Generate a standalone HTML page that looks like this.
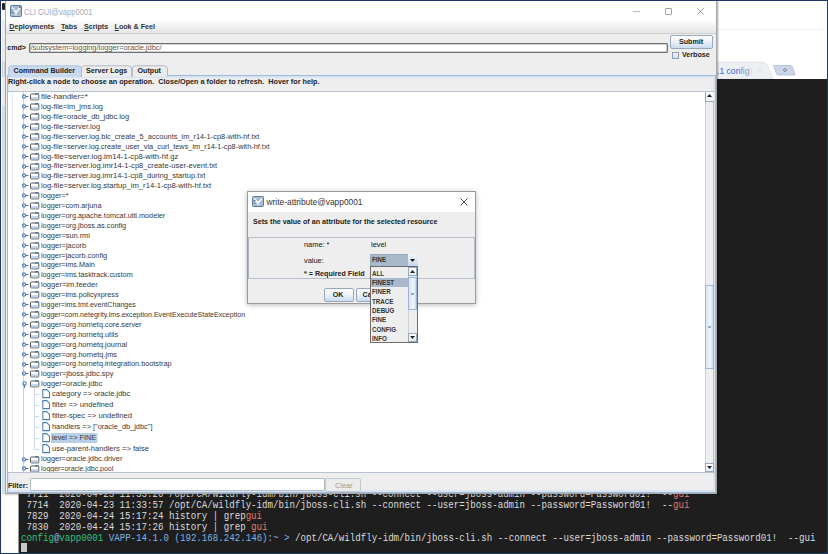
<!DOCTYPE html>
<html><head><meta charset="utf-8">
<style>
*{margin:0;padding:0;box-sizing:border-box}
html,body{width:828px;height:554px;overflow:hidden;background:#1f3a6a}
body{position:relative;font-family:"Liberation Sans",sans-serif}
.a{position:absolute}
#desk{left:1px;top:1px;width:826px;height:552px;background:#fff}
#term{left:19px;top:79px;width:808px;height:474px;background:#1e1e1e;font-family:"Liberation Mono",monospace;font-size:10px;color:#dcdcdc;white-space:pre;overflow:hidden}
.tl{position:absolute;left:2px;line-height:11px;transform:scaleX(0.913);transform-origin:0 0}
.g{color:#e47a70}
#win{left:5px;top:1px;width:712px;height:493px;background:#eeeeee;border:1px solid #a8a8a8;border-top:none;overflow:hidden}
.bt{font-size:7.15px;font-weight:bold;color:#222;white-space:nowrap;position:absolute;line-height:9px}
.tr{position:absolute;font-size:7.35px;color:#383838;white-space:nowrap;line-height:10px;transform-origin:0 50%}
.sel{background:#b8cfe5;padding:0 1px;margin-left:-1px}
.btn{position:absolute;border:1px solid #98a8bc;border-radius:2px;background:linear-gradient(#fdfdfd,#eef3f9 45%,#c9dcf0)}
</style></head><body>
<div id="desk" class="a"></div>
<!-- behind browser tabs -->
<div class="a" style="left:717px;top:29px;width:109px;height:1px;background:#f2f2f2"></div>
<svg class="a" style="left:700px;top:60px" width="110" height="20" viewBox="0 0 110 20">
<path d="M0 19 L0 4 Q0 2 4 2 L62 2 Q66 2 68 6 L73 19 Z" fill="#eceff3" stroke="#dfe3e8" stroke-width="0.8"/>
<path d="M73.5 5.5 L90.5 5.5 Q91.5 5.5 92 6.5 L95.2 14 Q95.4 15 94.2 15 L78 15 Q77 15 76.6 14 Z" fill="#c9d6e7" stroke="#aebcd0" stroke-width="0.8"/>
<path d="M85 8.3 L86.7 10 L85 11.7 L83.3 10 Z" fill="none" stroke="#555" stroke-width="0.7"/>
</svg>
<div class="a" style="left:717px;top:66px;font-size:8.6px;color:#4a5ee0;white-space:nowrap;line-height:10px">.1 con<span style="color:#8e96a6">fig</span><span style="color:#d8dce2">)</span></div>
<div class="a" style="left:757px;top:65px;font-size:9px;color:#e4e4e4">×</div>
<div class="a" style="left:2px;top:3px;width:3px;height:7px;background:#222;border-radius:1px"></div>
<div class="a" style="left:2px;top:20px;width:3px;height:86px;background:#ececec"></div>
<div class="a" style="left:2px;top:106px;width:3px;height:388px;background:#d3deeb"></div>
<div class="a" style="left:2px;top:61px;width:3px;height:16px;border:1px solid #ccc;border-radius:2px"></div>
<div class="a" style="left:18px;top:494px;width:1px;height:59px;background:#999"></div>
<div id="term" class="a">
<div class="tl" style="top:410px"> 7711  2020-04-23 11:33:20 /opt/CA/wildfly-idm/bin/jboss-cli.sh --connect --user=jboss-admin --password=Password01!  --<span class="g">gui</span></div>
<div class="tl" style="top:421px"> 7714  2020-04-23 11:33:57 /opt/CA/wildfly-idm/bin/jboss-cli.sh --connect --user=jboss-admin --password=Password01!  --<span class="g">gui</span></div>
<div class="tl" style="top:431.8px"> 7829  2020-04-24 15:17:24 history | grep<span class="g">gui</span></div>
<div class="tl" style="top:443px"> 7830  2020-04-24 15:17:26 history | grep <span class="g">gui</span></div>
<div class="tl" style="top:454px"><span style="color:#2ec27e">config</span><span style="color:#8fb0d8">@</span><span style="color:#2ec27e">vapp0001</span> <span style="color:#7db3e6">VAPP-14.1.0 (192.168.242.146):~ &gt;</span> /opt/CA/wildfly-idm/bin/jboss-cli.sh --connect --user=jboss-admin --password=Password01!  --gui</div>
<div class="a" style="left:2px;top:464px;width:6px;height:9px;background:#c8c8c8"></div>
</div>

<div class="a" style="left:717px;top:1px;width:2px;height:494px;background:linear-gradient(90deg,rgba(0,0,0,0.3),rgba(0,0,0,0.05))"></div>
<div class="a" style="left:720px;top:79px;width:1px;height:415px;background:repeating-linear-gradient(#141414 0 1px,transparent 1px 4px)"></div>
<div class="a" style="left:5px;top:494px;width:713px;height:1.5px;background:linear-gradient(rgba(0,0,0,0.2),rgba(0,0,0,0))"></div>
<div id="win" class="a">
  <!-- title bar: window-local coords = page - (6,1) -->
  <div class="a" style="left:0;top:0;width:710px;height:19px;background:#fff"></div>
  <svg class="a" style="left:4.2px;top:4.2px" width="12" height="12" viewBox="0 0 12 12">
    <rect x="0.5" y="0.5" width="11" height="11" rx="1" fill="#a8bbcf" stroke="#5a7ba2" stroke-width="1"/>
    <path d="M2 2.5 L6 7.5 L10 2.5" stroke="#f7f9fb" stroke-width="1.6" fill="none"/>
    <path d="M6 7.5 V10.5" stroke="#f2f5f8" stroke-width="1.3"/>
    <path d="M1.5 5 H3.5 M1.5 7.5 H3.5" stroke="#5b708a" stroke-width="0.9"/>
    <circle cx="10" cy="2.2" r="1.1" fill="#8f8272"/>
  </svg>
  <div class="a" style="left:18.3px;top:5.8px;font-size:9.3px;line-height:10px;color:#a3acb5;white-space:nowrap;transform:scaleX(0.815);transform-origin:0 0">CLI GUI@vapp0001</div>
  <div class="a" style="left:627.3px;top:10px;width:6.7px;height:1px;background:#b8b8b8"></div>
  <div class="a" style="left:659px;top:6.8px;width:7px;height:6.8px;border:1px solid #a4a4a4;border-radius:1px"></div>
  <svg class="a" style="left:691.3px;top:6.5px" width="7" height="7" viewBox="0 0 7 7"><path d="M0.4 0.4 L6.6 6.6 M6.6 0.4 L0.4 6.6" stroke="#8a8a8a" stroke-width="0.9"/></svg>
  <!-- menubar -->
  <div class="a" style="left:0;top:19px;width:710px;height:14px;background:linear-gradient(#fdfdfd,#e6e6e6);border-bottom:1px solid #cdcdcd"></div>
  <div class="bt" style="left:3.3px;top:22px;color:#333"><u>D</u>eployments</div>
  <div class="bt" style="left:55px;top:22px;color:#333"><u>T</u>abs</div>
  <div class="bt" style="left:78px;top:22px;color:#333"><u>S</u>cripts</div>
  <div class="bt" style="left:108.5px;top:22px;color:#333"><u>L</u>ook &amp; Feel</div>
  <!-- cmd row -->
  <div class="bt" style="left:1.2px;top:42.8px">cmd&gt;</div>
  <div class="a" style="left:23px;top:42px;width:639px;height:10px;background:#fff;border:1px solid #6f6f6f;border-radius:1px;box-shadow:inset 0 0 0 0.5px #aaa"></div>
  <div class="a" style="left:24.5px;top:42px;font-size:7.45px;color:#555;white-space:nowrap;line-height:10px">/subsystem=logging/logger=oracle.jdbc/</div>
  <div class="btn" style="left:664px;top:33.5px;width:43px;height:14px"></div>
  <div class="bt" style="left:673px;top:36.5px">Submit</div>
  <div class="a" style="left:666px;top:50.5px;width:7px;height:7px;border:1px solid #8aa0b8;background:linear-gradient(#f4f8fc,#d0dff0)"></div>
  <div class="bt" style="left:676px;top:50px">Verbose</div>
  <!-- tabs -->
  <div class="a" style="left:1px;top:74px;width:709px;height:418px;border:1px solid #9fb7da;border-right-width:1.5px;box-shadow:inset 0 0 0 2px #dae5f2"></div>
  <svg class="a" style="left:2px;top:64px" width="170" height="13" viewBox="0 0 170 13">
    <path d="M0.7 12 V2.5 L2.5 0.8 L70 0.8 Q73.5 0.8 73.5 4 L73.5 12" fill="#c8daef" stroke="#a9c0dc" stroke-width="0.9"/>
    <path d="M73.5 12 V2.5 L75.3 0.8 L120 0.8 Q123.7 0.8 123.7 4 L123.7 11.5" fill="#ececec" stroke="#a8b4c2" stroke-width="0.9"/>
    <path d="M124.5 12 V2.5 L126.3 0.8 L156 0.8 Q159.5 0.8 159.5 4 L159.5 11.5" fill="#ececec" stroke="#a8b4c2" stroke-width="0.9"/>
  </svg>
  <div class="bt" style="left:7.5px;top:66px">Command Builder</div>
  <div class="bt" style="left:80px;top:66px">Server Logs</div>
  <div class="bt" style="left:131.5px;top:66px">Output</div>
  <div class="bt" style="left:2px;top:76.4px;font-size:7.25px">Right-click a node to choose an operation.&nbsp; Close/Open a folder to refresh.&nbsp; Hover for help.</div>
  <!-- tree -->
  <div class="a" style="left:2px;top:90px;width:708px;height:1px;background:#b9c3cf"></div>
  <div class="a" style="left:2px;top:91px;width:697px;height:380px;background:#fff;overflow:hidden">
<div class="a" style="left:4px;top:0px;width:1px;height:380px;background:#dfe8f3"></div>
<div class="a" style="left:26px;top:296px;width:1px;height:61px;background:#c9d8ea"></div>
<div class="a" style="left:15px;top:0px;width:1px;height:380px;background:#c4d5ea"></div>
<svg class="a" style="left:13.5px;top:2.200000000000003px" width="7" height="5" viewBox="0 0 7 5"><circle cx="2" cy="2.5" r="1.6" fill="none" stroke="#4a78b8" stroke-width="1.1"/><line x1="3.6" y1="2.5" x2="6.5" y2="2.5" stroke="#4a78b8" stroke-width="1.1"/></svg>
<svg class="a" style="left:22px;top:1.2000000000000028px" width="10" height="8" viewBox="0 0 10 8"><rect x="0.5" y="1.0" width="8.3" height="5.9" rx="0.8" fill="#fff" stroke="#5a5a5a" stroke-width="1"/><rect x="1.0" y="4.2" width="7.3" height="2.2" fill="#bcd2ea"/><rect x="5.0" y="0.1" width="3.8" height="1.3" fill="#4373b3"/></svg>
<div class="tr" style="left:33px;top:0.10000000000000853px;transform:scaleX(1.075)">file-handler=*</div>
<svg class="a" style="left:13.5px;top:12.100000000000009px" width="7" height="5" viewBox="0 0 7 5"><circle cx="2" cy="2.5" r="1.6" fill="none" stroke="#4a78b8" stroke-width="1.1"/><line x1="3.6" y1="2.5" x2="6.5" y2="2.5" stroke="#4a78b8" stroke-width="1.1"/></svg>
<svg class="a" style="left:22px;top:11.100000000000009px" width="10" height="8" viewBox="0 0 10 8"><rect x="0.5" y="1.0" width="8.3" height="5.9" rx="0.8" fill="#fff" stroke="#5a5a5a" stroke-width="1"/><rect x="1.0" y="4.2" width="7.3" height="2.2" fill="#bcd2ea"/><rect x="5.0" y="0.1" width="3.8" height="1.3" fill="#4373b3"/></svg>
<div class="tr" style="left:33px;top:10.000000000000014px;transform:scaleX(1.015)">log-file=im_jms.log</div>
<svg class="a" style="left:13.5px;top:22.0px" width="7" height="5" viewBox="0 0 7 5"><circle cx="2" cy="2.5" r="1.6" fill="none" stroke="#4a78b8" stroke-width="1.1"/><line x1="3.6" y1="2.5" x2="6.5" y2="2.5" stroke="#4a78b8" stroke-width="1.1"/></svg>
<svg class="a" style="left:22px;top:21.0px" width="10" height="8" viewBox="0 0 10 8"><rect x="0.5" y="1.0" width="8.3" height="5.9" rx="0.8" fill="#fff" stroke="#5a5a5a" stroke-width="1"/><rect x="1.0" y="4.2" width="7.3" height="2.2" fill="#bcd2ea"/><rect x="5.0" y="0.1" width="3.8" height="1.3" fill="#4373b3"/></svg>
<div class="tr" style="left:33px;top:19.900000000000006px;transform:scaleX(1.005)">log-file=oracle_db_jdbc.log</div>
<svg class="a" style="left:13.5px;top:31.900000000000006px" width="7" height="5" viewBox="0 0 7 5"><circle cx="2" cy="2.5" r="1.6" fill="none" stroke="#4a78b8" stroke-width="1.1"/><line x1="3.6" y1="2.5" x2="6.5" y2="2.5" stroke="#4a78b8" stroke-width="1.1"/></svg>
<svg class="a" style="left:22px;top:30.900000000000006px" width="10" height="8" viewBox="0 0 10 8"><rect x="0.5" y="1.0" width="8.3" height="5.9" rx="0.8" fill="#fff" stroke="#5a5a5a" stroke-width="1"/><rect x="1.0" y="4.2" width="7.3" height="2.2" fill="#bcd2ea"/><rect x="5.0" y="0.1" width="3.8" height="1.3" fill="#4373b3"/></svg>
<div class="tr" style="left:33px;top:29.80000000000001px;transform:scaleX(1.024)">log-file=server.log</div>
<svg class="a" style="left:13.5px;top:41.80000000000001px" width="7" height="5" viewBox="0 0 7 5"><circle cx="2" cy="2.5" r="1.6" fill="none" stroke="#4a78b8" stroke-width="1.1"/><line x1="3.6" y1="2.5" x2="6.5" y2="2.5" stroke="#4a78b8" stroke-width="1.1"/></svg>
<svg class="a" style="left:22px;top:40.80000000000001px" width="10" height="8" viewBox="0 0 10 8"><rect x="0.5" y="1.0" width="8.3" height="5.9" rx="0.8" fill="#fff" stroke="#5a5a5a" stroke-width="1"/><rect x="1.0" y="4.2" width="7.3" height="2.2" fill="#bcd2ea"/><rect x="5.0" y="0.1" width="3.8" height="1.3" fill="#4373b3"/></svg>
<div class="tr" style="left:33px;top:39.70000000000002px;transform:scaleX(1.008)">log-file=server.log.blc_create_5_accounts_im_r14-1-cp8-with-hf.txt</div>
<svg class="a" style="left:13.5px;top:51.69999999999999px" width="7" height="5" viewBox="0 0 7 5"><circle cx="2" cy="2.5" r="1.6" fill="none" stroke="#4a78b8" stroke-width="1.1"/><line x1="3.6" y1="2.5" x2="6.5" y2="2.5" stroke="#4a78b8" stroke-width="1.1"/></svg>
<svg class="a" style="left:22px;top:50.69999999999999px" width="10" height="8" viewBox="0 0 10 8"><rect x="0.5" y="1.0" width="8.3" height="5.9" rx="0.8" fill="#fff" stroke="#5a5a5a" stroke-width="1"/><rect x="1.0" y="4.2" width="7.3" height="2.2" fill="#bcd2ea"/><rect x="5.0" y="0.1" width="3.8" height="1.3" fill="#4373b3"/></svg>
<div class="tr" style="left:33px;top:49.599999999999994px;transform:scaleX(1.001)">log-file=server.log.create_user_via_curl_tews_im_r14-1-cp8-with-hf.txt</div>
<svg class="a" style="left:13.5px;top:61.60000000000002px" width="7" height="5" viewBox="0 0 7 5"><circle cx="2" cy="2.5" r="1.6" fill="none" stroke="#4a78b8" stroke-width="1.1"/><line x1="3.6" y1="2.5" x2="6.5" y2="2.5" stroke="#4a78b8" stroke-width="1.1"/></svg>
<svg class="a" style="left:22px;top:60.60000000000002px" width="10" height="8" viewBox="0 0 10 8"><rect x="0.5" y="1.0" width="8.3" height="5.9" rx="0.8" fill="#fff" stroke="#5a5a5a" stroke-width="1"/><rect x="1.0" y="4.2" width="7.3" height="2.2" fill="#bcd2ea"/><rect x="5.0" y="0.1" width="3.8" height="1.3" fill="#4373b3"/></svg>
<div class="tr" style="left:33px;top:59.50000000000003px;transform:scaleX(1.054)">log-file=server.log.im14-1-cp8-with-hf.gz</div>
<svg class="a" style="left:13.5px;top:71.5px" width="7" height="5" viewBox="0 0 7 5"><circle cx="2" cy="2.5" r="1.6" fill="none" stroke="#4a78b8" stroke-width="1.1"/><line x1="3.6" y1="2.5" x2="6.5" y2="2.5" stroke="#4a78b8" stroke-width="1.1"/></svg>
<svg class="a" style="left:22px;top:70.5px" width="10" height="8" viewBox="0 0 10 8"><rect x="0.5" y="1.0" width="8.3" height="5.9" rx="0.8" fill="#fff" stroke="#5a5a5a" stroke-width="1"/><rect x="1.0" y="4.2" width="7.3" height="2.2" fill="#bcd2ea"/><rect x="5.0" y="0.1" width="3.8" height="1.3" fill="#4373b3"/></svg>
<div class="tr" style="left:33px;top:69.4px;transform:scaleX(1.034)">log-file=server.log.imr14-1-cp8_create-user-event.txt</div>
<svg class="a" style="left:13.5px;top:81.4px" width="7" height="5" viewBox="0 0 7 5"><circle cx="2" cy="2.5" r="1.6" fill="none" stroke="#4a78b8" stroke-width="1.1"/><line x1="3.6" y1="2.5" x2="6.5" y2="2.5" stroke="#4a78b8" stroke-width="1.1"/></svg>
<svg class="a" style="left:22px;top:80.4px" width="10" height="8" viewBox="0 0 10 8"><rect x="0.5" y="1.0" width="8.3" height="5.9" rx="0.8" fill="#fff" stroke="#5a5a5a" stroke-width="1"/><rect x="1.0" y="4.2" width="7.3" height="2.2" fill="#bcd2ea"/><rect x="5.0" y="0.1" width="3.8" height="1.3" fill="#4373b3"/></svg>
<div class="tr" style="left:33px;top:79.30000000000001px;transform:scaleX(1.028)">log-file=server.log.imr14-1-cp8_during_startup.txt</div>
<svg class="a" style="left:13.5px;top:91.30000000000001px" width="7" height="5" viewBox="0 0 7 5"><circle cx="2" cy="2.5" r="1.6" fill="none" stroke="#4a78b8" stroke-width="1.1"/><line x1="3.6" y1="2.5" x2="6.5" y2="2.5" stroke="#4a78b8" stroke-width="1.1"/></svg>
<svg class="a" style="left:22px;top:90.30000000000001px" width="10" height="8" viewBox="0 0 10 8"><rect x="0.5" y="1.0" width="8.3" height="5.9" rx="0.8" fill="#fff" stroke="#5a5a5a" stroke-width="1"/><rect x="1.0" y="4.2" width="7.3" height="2.2" fill="#bcd2ea"/><rect x="5.0" y="0.1" width="3.8" height="1.3" fill="#4373b3"/></svg>
<div class="tr" style="left:33px;top:89.20000000000002px;transform:scaleX(1.040)">log-file=server.log.startup_im_r14-1-cp8-with-hf.txt</div>
<svg class="a" style="left:13.5px;top:101.19999999999999px" width="7" height="5" viewBox="0 0 7 5"><circle cx="2" cy="2.5" r="1.6" fill="none" stroke="#4a78b8" stroke-width="1.1"/><line x1="3.6" y1="2.5" x2="6.5" y2="2.5" stroke="#4a78b8" stroke-width="1.1"/></svg>
<svg class="a" style="left:22px;top:100.19999999999999px" width="10" height="8" viewBox="0 0 10 8"><rect x="0.5" y="1.0" width="8.3" height="5.9" rx="0.8" fill="#fff" stroke="#5a5a5a" stroke-width="1"/><rect x="1.0" y="4.2" width="7.3" height="2.2" fill="#bcd2ea"/><rect x="5.0" y="0.1" width="3.8" height="1.3" fill="#4373b3"/></svg>
<div class="tr" style="left:33px;top:99.1px;transform:scaleX(1.000)">logger=*</div>
<svg class="a" style="left:13.5px;top:111.10000000000002px" width="7" height="5" viewBox="0 0 7 5"><circle cx="2" cy="2.5" r="1.6" fill="none" stroke="#4a78b8" stroke-width="1.1"/><line x1="3.6" y1="2.5" x2="6.5" y2="2.5" stroke="#4a78b8" stroke-width="1.1"/></svg>
<svg class="a" style="left:22px;top:110.10000000000002px" width="10" height="8" viewBox="0 0 10 8"><rect x="0.5" y="1.0" width="8.3" height="5.9" rx="0.8" fill="#fff" stroke="#5a5a5a" stroke-width="1"/><rect x="1.0" y="4.2" width="7.3" height="2.2" fill="#bcd2ea"/><rect x="5.0" y="0.1" width="3.8" height="1.3" fill="#4373b3"/></svg>
<div class="tr" style="left:33px;top:109.00000000000003px;transform:scaleX(0.990)">logger=com.arjuna</div>
<svg class="a" style="left:13.5px;top:121.0px" width="7" height="5" viewBox="0 0 7 5"><circle cx="2" cy="2.5" r="1.6" fill="none" stroke="#4a78b8" stroke-width="1.1"/><line x1="3.6" y1="2.5" x2="6.5" y2="2.5" stroke="#4a78b8" stroke-width="1.1"/></svg>
<svg class="a" style="left:22px;top:120.0px" width="10" height="8" viewBox="0 0 10 8"><rect x="0.5" y="1.0" width="8.3" height="5.9" rx="0.8" fill="#fff" stroke="#5a5a5a" stroke-width="1"/><rect x="1.0" y="4.2" width="7.3" height="2.2" fill="#bcd2ea"/><rect x="5.0" y="0.1" width="3.8" height="1.3" fill="#4373b3"/></svg>
<div class="tr" style="left:33px;top:118.9px;transform:scaleX(0.990)">logger=org.apache.tomcat.util.modeler</div>
<svg class="a" style="left:13.5px;top:130.90000000000003px" width="7" height="5" viewBox="0 0 7 5"><circle cx="2" cy="2.5" r="1.6" fill="none" stroke="#4a78b8" stroke-width="1.1"/><line x1="3.6" y1="2.5" x2="6.5" y2="2.5" stroke="#4a78b8" stroke-width="1.1"/></svg>
<svg class="a" style="left:22px;top:129.90000000000003px" width="10" height="8" viewBox="0 0 10 8"><rect x="0.5" y="1.0" width="8.3" height="5.9" rx="0.8" fill="#fff" stroke="#5a5a5a" stroke-width="1"/><rect x="1.0" y="4.2" width="7.3" height="2.2" fill="#bcd2ea"/><rect x="5.0" y="0.1" width="3.8" height="1.3" fill="#4373b3"/></svg>
<div class="tr" style="left:33px;top:128.80000000000004px;transform:scaleX(0.991)">logger=org.jboss.as.config</div>
<svg class="a" style="left:13.5px;top:140.8px" width="7" height="5" viewBox="0 0 7 5"><circle cx="2" cy="2.5" r="1.6" fill="none" stroke="#4a78b8" stroke-width="1.1"/><line x1="3.6" y1="2.5" x2="6.5" y2="2.5" stroke="#4a78b8" stroke-width="1.1"/></svg>
<svg class="a" style="left:22px;top:139.8px" width="10" height="8" viewBox="0 0 10 8"><rect x="0.5" y="1.0" width="8.3" height="5.9" rx="0.8" fill="#fff" stroke="#5a5a5a" stroke-width="1"/><rect x="1.0" y="4.2" width="7.3" height="2.2" fill="#bcd2ea"/><rect x="5.0" y="0.1" width="3.8" height="1.3" fill="#4373b3"/></svg>
<div class="tr" style="left:33px;top:138.70000000000002px;transform:scaleX(1.002)">logger=sun.rmi</div>
<svg class="a" style="left:13.5px;top:150.7px" width="7" height="5" viewBox="0 0 7 5"><circle cx="2" cy="2.5" r="1.6" fill="none" stroke="#4a78b8" stroke-width="1.1"/><line x1="3.6" y1="2.5" x2="6.5" y2="2.5" stroke="#4a78b8" stroke-width="1.1"/></svg>
<svg class="a" style="left:22px;top:149.7px" width="10" height="8" viewBox="0 0 10 8"><rect x="0.5" y="1.0" width="8.3" height="5.9" rx="0.8" fill="#fff" stroke="#5a5a5a" stroke-width="1"/><rect x="1.0" y="4.2" width="7.3" height="2.2" fill="#bcd2ea"/><rect x="5.0" y="0.1" width="3.8" height="1.3" fill="#4373b3"/></svg>
<div class="tr" style="left:33px;top:148.6px;transform:scaleX(1.009)">logger=jacorb</div>
<svg class="a" style="left:13.5px;top:160.60000000000002px" width="7" height="5" viewBox="0 0 7 5"><circle cx="2" cy="2.5" r="1.6" fill="none" stroke="#4a78b8" stroke-width="1.1"/><line x1="3.6" y1="2.5" x2="6.5" y2="2.5" stroke="#4a78b8" stroke-width="1.1"/></svg>
<svg class="a" style="left:22px;top:159.60000000000002px" width="10" height="8" viewBox="0 0 10 8"><rect x="0.5" y="1.0" width="8.3" height="5.9" rx="0.8" fill="#fff" stroke="#5a5a5a" stroke-width="1"/><rect x="1.0" y="4.2" width="7.3" height="2.2" fill="#bcd2ea"/><rect x="5.0" y="0.1" width="3.8" height="1.3" fill="#4373b3"/></svg>
<div class="tr" style="left:33px;top:158.50000000000003px;transform:scaleX(0.997)">logger=jacorb.config</div>
<svg class="a" style="left:13.5px;top:170.5px" width="7" height="5" viewBox="0 0 7 5"><circle cx="2" cy="2.5" r="1.6" fill="none" stroke="#4a78b8" stroke-width="1.1"/><line x1="3.6" y1="2.5" x2="6.5" y2="2.5" stroke="#4a78b8" stroke-width="1.1"/></svg>
<svg class="a" style="left:22px;top:169.5px" width="10" height="8" viewBox="0 0 10 8"><rect x="0.5" y="1.0" width="8.3" height="5.9" rx="0.8" fill="#fff" stroke="#5a5a5a" stroke-width="1"/><rect x="1.0" y="4.2" width="7.3" height="2.2" fill="#bcd2ea"/><rect x="5.0" y="0.1" width="3.8" height="1.3" fill="#4373b3"/></svg>
<div class="tr" style="left:33px;top:168.39999999999998px;transform:scaleX(0.996)">logger=ims.Main</div>
<svg class="a" style="left:13.5px;top:180.40000000000003px" width="7" height="5" viewBox="0 0 7 5"><circle cx="2" cy="2.5" r="1.6" fill="none" stroke="#4a78b8" stroke-width="1.1"/><line x1="3.6" y1="2.5" x2="6.5" y2="2.5" stroke="#4a78b8" stroke-width="1.1"/></svg>
<svg class="a" style="left:22px;top:179.40000000000003px" width="10" height="8" viewBox="0 0 10 8"><rect x="0.5" y="1.0" width="8.3" height="5.9" rx="0.8" fill="#fff" stroke="#5a5a5a" stroke-width="1"/><rect x="1.0" y="4.2" width="7.3" height="2.2" fill="#bcd2ea"/><rect x="5.0" y="0.1" width="3.8" height="1.3" fill="#4373b3"/></svg>
<div class="tr" style="left:33px;top:178.3px;transform:scaleX(0.984)">logger=ims.tasktrack.custom</div>
<svg class="a" style="left:13.5px;top:190.3px" width="7" height="5" viewBox="0 0 7 5"><circle cx="2" cy="2.5" r="1.6" fill="none" stroke="#4a78b8" stroke-width="1.1"/><line x1="3.6" y1="2.5" x2="6.5" y2="2.5" stroke="#4a78b8" stroke-width="1.1"/></svg>
<svg class="a" style="left:22px;top:189.3px" width="10" height="8" viewBox="0 0 10 8"><rect x="0.5" y="1.0" width="8.3" height="5.9" rx="0.8" fill="#fff" stroke="#5a5a5a" stroke-width="1"/><rect x="1.0" y="4.2" width="7.3" height="2.2" fill="#bcd2ea"/><rect x="5.0" y="0.1" width="3.8" height="1.3" fill="#4373b3"/></svg>
<div class="tr" style="left:33px;top:188.2px;transform:scaleX(1.024)">logger=im.feeder</div>
<svg class="a" style="left:13.5px;top:200.2px" width="7" height="5" viewBox="0 0 7 5"><circle cx="2" cy="2.5" r="1.6" fill="none" stroke="#4a78b8" stroke-width="1.1"/><line x1="3.6" y1="2.5" x2="6.5" y2="2.5" stroke="#4a78b8" stroke-width="1.1"/></svg>
<svg class="a" style="left:22px;top:199.2px" width="10" height="8" viewBox="0 0 10 8"><rect x="0.5" y="1.0" width="8.3" height="5.9" rx="0.8" fill="#fff" stroke="#5a5a5a" stroke-width="1"/><rect x="1.0" y="4.2" width="7.3" height="2.2" fill="#bcd2ea"/><rect x="5.0" y="0.1" width="3.8" height="1.3" fill="#4373b3"/></svg>
<div class="tr" style="left:33px;top:198.09999999999997px;transform:scaleX(0.987)">logger=ims.policyxpress</div>
<svg class="a" style="left:13.5px;top:210.10000000000002px" width="7" height="5" viewBox="0 0 7 5"><circle cx="2" cy="2.5" r="1.6" fill="none" stroke="#4a78b8" stroke-width="1.1"/><line x1="3.6" y1="2.5" x2="6.5" y2="2.5" stroke="#4a78b8" stroke-width="1.1"/></svg>
<svg class="a" style="left:22px;top:209.10000000000002px" width="10" height="8" viewBox="0 0 10 8"><rect x="0.5" y="1.0" width="8.3" height="5.9" rx="0.8" fill="#fff" stroke="#5a5a5a" stroke-width="1"/><rect x="1.0" y="4.2" width="7.3" height="2.2" fill="#bcd2ea"/><rect x="5.0" y="0.1" width="3.8" height="1.3" fill="#4373b3"/></svg>
<div class="tr" style="left:33px;top:208.0px;transform:scaleX(0.970)">logger=ims.tmt.eventChanges</div>
<svg class="a" style="left:13.5px;top:220.0px" width="7" height="5" viewBox="0 0 7 5"><circle cx="2" cy="2.5" r="1.6" fill="none" stroke="#4a78b8" stroke-width="1.1"/><line x1="3.6" y1="2.5" x2="6.5" y2="2.5" stroke="#4a78b8" stroke-width="1.1"/></svg>
<svg class="a" style="left:22px;top:219.0px" width="10" height="8" viewBox="0 0 10 8"><rect x="0.5" y="1.0" width="8.3" height="5.9" rx="0.8" fill="#fff" stroke="#5a5a5a" stroke-width="1"/><rect x="1.0" y="4.2" width="7.3" height="2.2" fill="#bcd2ea"/><rect x="5.0" y="0.1" width="3.8" height="1.3" fill="#4373b3"/></svg>
<div class="tr" style="left:33px;top:217.89999999999998px;transform:scaleX(0.963)">logger=com.netegrity.ims.exception.EventExecuteStateException</div>
<svg class="a" style="left:13.5px;top:229.90000000000003px" width="7" height="5" viewBox="0 0 7 5"><circle cx="2" cy="2.5" r="1.6" fill="none" stroke="#4a78b8" stroke-width="1.1"/><line x1="3.6" y1="2.5" x2="6.5" y2="2.5" stroke="#4a78b8" stroke-width="1.1"/></svg>
<svg class="a" style="left:22px;top:228.90000000000003px" width="10" height="8" viewBox="0 0 10 8"><rect x="0.5" y="1.0" width="8.3" height="5.9" rx="0.8" fill="#fff" stroke="#5a5a5a" stroke-width="1"/><rect x="1.0" y="4.2" width="7.3" height="2.2" fill="#bcd2ea"/><rect x="5.0" y="0.1" width="3.8" height="1.3" fill="#4373b3"/></svg>
<div class="tr" style="left:33px;top:227.8px;transform:scaleX(0.995)">logger=org.hornetq.core.server</div>
<svg class="a" style="left:13.5px;top:239.8px" width="7" height="5" viewBox="0 0 7 5"><circle cx="2" cy="2.5" r="1.6" fill="none" stroke="#4a78b8" stroke-width="1.1"/><line x1="3.6" y1="2.5" x2="6.5" y2="2.5" stroke="#4a78b8" stroke-width="1.1"/></svg>
<svg class="a" style="left:22px;top:238.8px" width="10" height="8" viewBox="0 0 10 8"><rect x="0.5" y="1.0" width="8.3" height="5.9" rx="0.8" fill="#fff" stroke="#5a5a5a" stroke-width="1"/><rect x="1.0" y="4.2" width="7.3" height="2.2" fill="#bcd2ea"/><rect x="5.0" y="0.1" width="3.8" height="1.3" fill="#4373b3"/></svg>
<div class="tr" style="left:33px;top:237.7px;transform:scaleX(0.996)">logger=org.hornetq.utils</div>
<svg class="a" style="left:13.5px;top:249.7px" width="7" height="5" viewBox="0 0 7 5"><circle cx="2" cy="2.5" r="1.6" fill="none" stroke="#4a78b8" stroke-width="1.1"/><line x1="3.6" y1="2.5" x2="6.5" y2="2.5" stroke="#4a78b8" stroke-width="1.1"/></svg>
<svg class="a" style="left:22px;top:248.7px" width="10" height="8" viewBox="0 0 10 8"><rect x="0.5" y="1.0" width="8.3" height="5.9" rx="0.8" fill="#fff" stroke="#5a5a5a" stroke-width="1"/><rect x="1.0" y="4.2" width="7.3" height="2.2" fill="#bcd2ea"/><rect x="5.0" y="0.1" width="3.8" height="1.3" fill="#4373b3"/></svg>
<div class="tr" style="left:33px;top:247.59999999999997px;transform:scaleX(0.997)">logger=org.hornetq.journal</div>
<svg class="a" style="left:13.5px;top:259.6px" width="7" height="5" viewBox="0 0 7 5"><circle cx="2" cy="2.5" r="1.6" fill="none" stroke="#4a78b8" stroke-width="1.1"/><line x1="3.6" y1="2.5" x2="6.5" y2="2.5" stroke="#4a78b8" stroke-width="1.1"/></svg>
<svg class="a" style="left:22px;top:258.6px" width="10" height="8" viewBox="0 0 10 8"><rect x="0.5" y="1.0" width="8.3" height="5.9" rx="0.8" fill="#fff" stroke="#5a5a5a" stroke-width="1"/><rect x="1.0" y="4.2" width="7.3" height="2.2" fill="#bcd2ea"/><rect x="5.0" y="0.1" width="3.8" height="1.3" fill="#4373b3"/></svg>
<div class="tr" style="left:33px;top:257.5px;transform:scaleX(1.003)">logger=org.hornetq.jms</div>
<svg class="a" style="left:13.5px;top:269.5px" width="7" height="5" viewBox="0 0 7 5"><circle cx="2" cy="2.5" r="1.6" fill="none" stroke="#4a78b8" stroke-width="1.1"/><line x1="3.6" y1="2.5" x2="6.5" y2="2.5" stroke="#4a78b8" stroke-width="1.1"/></svg>
<svg class="a" style="left:22px;top:268.5px" width="10" height="8" viewBox="0 0 10 8"><rect x="0.5" y="1.0" width="8.3" height="5.9" rx="0.8" fill="#fff" stroke="#5a5a5a" stroke-width="1"/><rect x="1.0" y="4.2" width="7.3" height="2.2" fill="#bcd2ea"/><rect x="5.0" y="0.1" width="3.8" height="1.3" fill="#4373b3"/></svg>
<div class="tr" style="left:33px;top:267.4px;transform:scaleX(0.995)">logger=org.hornetq.integration.bootstrap</div>
<svg class="a" style="left:13.5px;top:279.4px" width="7" height="5" viewBox="0 0 7 5"><circle cx="2" cy="2.5" r="1.6" fill="none" stroke="#4a78b8" stroke-width="1.1"/><line x1="3.6" y1="2.5" x2="6.5" y2="2.5" stroke="#4a78b8" stroke-width="1.1"/></svg>
<svg class="a" style="left:22px;top:278.4px" width="10" height="8" viewBox="0 0 10 8"><rect x="0.5" y="1.0" width="8.3" height="5.9" rx="0.8" fill="#fff" stroke="#5a5a5a" stroke-width="1"/><rect x="1.0" y="4.2" width="7.3" height="2.2" fill="#bcd2ea"/><rect x="5.0" y="0.1" width="3.8" height="1.3" fill="#4373b3"/></svg>
<div class="tr" style="left:33px;top:277.29999999999995px;transform:scaleX(1.023)">logger=jboss.jdbc.spy</div>
<svg class="a" style="left:13.5px;top:288.8px" width="6" height="8" viewBox="0 0 6 8"><circle cx="2.5" cy="2.4" r="1.7" fill="none" stroke="#4a78b8" stroke-width="1.1"/><line x1="2.5" y1="4" x2="2.5" y2="7" stroke="#4a78b8" stroke-width="1.1"/></svg>
<svg class="a" style="left:22px;top:288.3px" width="10" height="8" viewBox="0 0 10 8"><rect x="0.5" y="1.0" width="8.3" height="5.9" rx="0.8" fill="#fff" stroke="#5a5a5a" stroke-width="1"/><rect x="1.0" y="4.2" width="7.3" height="2.2" fill="#bcd2ea"/><rect x="5.0" y="0.1" width="3.8" height="1.3" fill="#4373b3"/></svg>
<div class="tr" style="left:33px;top:287.2px;transform:scaleX(1.017)">logger=oracle.jdbc</div>
<div class="a" style="left:26.200000000000003px;top:302.0px;width:5px;height:1px;background:#c9d8ea"></div>
<svg class="a" style="left:33.5px;top:297.3px" width="9" height="10" viewBox="0 0 9 10"><path d="M0.8 0.6 H4.8 L7.5 3.3 V8.6 H0.8 Z" fill="#fff" stroke="#4a7ab9" stroke-width="1.05" stroke-linejoin="round"/></svg>
<div class="tr" style="left:43.6px;top:297.4px;transform:scaleX(1.026)">category =&gt; oracle.jdbc</div>
<div class="a" style="left:26.200000000000003px;top:312.9px;width:5px;height:1px;background:#c9d8ea"></div>
<svg class="a" style="left:33.5px;top:308.2px" width="9" height="10" viewBox="0 0 9 10"><path d="M0.8 0.6 H4.8 L7.5 3.3 V8.6 H0.8 Z" fill="#fff" stroke="#4a7ab9" stroke-width="1.05" stroke-linejoin="round"/></svg>
<div class="tr" style="left:43.6px;top:308.29999999999995px;transform:scaleX(1.044)">filter =&gt; undefined</div>
<div class="a" style="left:26.200000000000003px;top:323.8px;width:5px;height:1px;background:#c9d8ea"></div>
<svg class="a" style="left:33.5px;top:319.1px" width="9" height="10" viewBox="0 0 9 10"><path d="M0.8 0.6 H4.8 L7.5 3.3 V8.6 H0.8 Z" fill="#fff" stroke="#4a7ab9" stroke-width="1.05" stroke-linejoin="round"/></svg>
<div class="tr" style="left:43.6px;top:319.2px;transform:scaleX(1.043)">filter-spec =&gt; undefined</div>
<div class="a" style="left:26.200000000000003px;top:334.7px;width:5px;height:1px;background:#c9d8ea"></div>
<svg class="a" style="left:33.5px;top:330.0px" width="9" height="10" viewBox="0 0 9 10"><path d="M0.8 0.6 H4.8 L7.5 3.3 V8.6 H0.8 Z" fill="#fff" stroke="#4a7ab9" stroke-width="1.05" stroke-linejoin="round"/></svg>
<div class="tr" style="left:43.6px;top:330.09999999999997px;transform:scaleX(1.005)">handlers =&gt; ["oracle_db_jdbc"]</div>
<div class="a" style="left:26.200000000000003px;top:345.6px;width:5px;height:1px;background:#c9d8ea"></div>
<svg class="a" style="left:33.5px;top:340.90000000000003px" width="9" height="10" viewBox="0 0 9 10"><path d="M0.8 0.6 H4.8 L7.5 3.3 V8.6 H0.8 Z" fill="#fff" stroke="#4a7ab9" stroke-width="1.05" stroke-linejoin="round"/></svg>
<div class="tr sel" style="left:43.6px;top:341.0px;transform:scaleX(0.989)">level =&gt; FINE</div>
<div class="a" style="left:26.200000000000003px;top:356.5px;width:5px;height:1px;background:#c9d8ea"></div>
<svg class="a" style="left:33.5px;top:351.8px" width="9" height="10" viewBox="0 0 9 10"><path d="M0.8 0.6 H4.8 L7.5 3.3 V8.6 H0.8 Z" fill="#fff" stroke="#4a7ab9" stroke-width="1.05" stroke-linejoin="round"/></svg>
<div class="tr" style="left:43.6px;top:351.9px;transform:scaleX(1.033)">use-parent-handlers =&gt; false</div>
<svg class="a" style="left:13.5px;top:364.5px" width="7" height="5" viewBox="0 0 7 5"><circle cx="2" cy="2.5" r="1.6" fill="none" stroke="#4a78b8" stroke-width="1.1"/><line x1="3.6" y1="2.5" x2="6.5" y2="2.5" stroke="#4a78b8" stroke-width="1.1"/></svg>
<svg class="a" style="left:22px;top:363.5px" width="10" height="8" viewBox="0 0 10 8"><rect x="0.5" y="1.0" width="8.3" height="5.9" rx="0.8" fill="#fff" stroke="#5a5a5a" stroke-width="1"/><rect x="1.0" y="4.2" width="7.3" height="2.2" fill="#bcd2ea"/><rect x="5.0" y="0.1" width="3.8" height="1.3" fill="#4373b3"/></svg>
<div class="tr" style="left:33px;top:362.4px;transform:scaleX(1.010)">logger=oracle.jdbc.driver</div>
<svg class="a" style="left:13.5px;top:374.4px" width="7" height="5" viewBox="0 0 7 5"><circle cx="2" cy="2.5" r="1.6" fill="none" stroke="#4a78b8" stroke-width="1.1"/><line x1="3.6" y1="2.5" x2="6.5" y2="2.5" stroke="#4a78b8" stroke-width="1.1"/></svg>
<svg class="a" style="left:22px;top:373.4px" width="10" height="8" viewBox="0 0 10 8"><rect x="0.5" y="1.0" width="8.3" height="5.9" rx="0.8" fill="#fff" stroke="#5a5a5a" stroke-width="1"/><rect x="1.0" y="4.2" width="7.3" height="2.2" fill="#bcd2ea"/><rect x="5.0" y="0.1" width="3.8" height="1.3" fill="#4373b3"/></svg>
<div class="tr" style="left:33px;top:372.29999999999995px;transform:scaleX(0.949)">logger=oracle.jdbc.pool</div>
  </div>
  <!-- scrollbar -->
  <div class="a" style="left:699px;top:91px;width:9px;height:380px;background:#eeeeee;border-left:1px solid #c9d3de;border-right:1px solid #b8c4d0"></div>
  <div class="btn" style="left:699px;top:91px;width:9px;height:9.5px;border-radius:0;border-top:none;border-right:none;background:linear-gradient(#fbfbfb,#eef2f6)"></div>
  <svg class="a" style="left:701px;top:93.2px" width="5" height="3" viewBox="0 0 5 3"><path d="M0 3 L2.5 0 L5 3Z" fill="#222"/></svg>
  <div class="a" style="left:699px;top:284px;width:9px;height:84px;border:1px solid #9fb6d2;background:linear-gradient(90deg,#d6e4f3,#f0f6fc 60%,#c8dbf0)"></div>
  <div class="a" style="left:702px;top:325px;width:3px;height:2px;background:#97aac2"></div>
  <div class="btn" style="left:699px;top:462px;width:9px;height:9px;border-radius:0;background:linear-gradient(#fff,#e6eef7)"></div>
  <svg class="a" style="left:701px;top:465px" width="5" height="3" viewBox="0 0 5 3"><path d="M0 0 L5 0 L2.5 3Z" fill="#222"/></svg>
  <div class="a" style="left:2px;top:471px;width:708px;height:1px;background:#b9c3cf"></div>
  <!-- filter row -->
  <div class="bt" style="left:2px;top:481.3px">Filter:</div>
  <div class="a" style="left:24px;top:477px;width:295px;height:13px;background:#fff;border:1px solid #b5bdc6;border-radius:1px"></div>
  <div class="a" style="left:319px;top:477px;width:36px;height:14px;background:#ececec;border:1px solid #c3c8ce;border-radius:2px"></div>
  <div class="a" style="left:329px;top:479.5px;font-size:7.4px;color:#9a9a9a;line-height:9px">Clear</div>
</div>

<!-- dialog -->
<div class="a" style="left:247px;top:191px;width:229px;height:113px;background:#eeeeee;border:1px solid #9a9a9a;box-shadow:0 1px 5px rgba(0,0,0,0.28);overflow:hidden">
  <div class="a" style="left:0;top:0;width:227px;height:20px;background:#fff"></div>
  <svg class="a" style="left:4.3px;top:4.3px" width="12" height="11" viewBox="0 0 12 11">
    <rect x="0.5" y="0.5" width="11" height="10" rx="1" fill="#a8bbcf" stroke="#5a7ba2" stroke-width="1"/>
    <path d="M2 2.5 L6 7 L10 2.5" stroke="#f7f9fb" stroke-width="1.5" fill="none"/>
    <path d="M6 7 V9.5" stroke="#f2f5f8" stroke-width="1.2"/>
    <path d="M1.5 4.5 H3.5 M1.5 7 H3.5" stroke="#5b708a" stroke-width="0.9"/>
  </svg>
  <div class="a" style="left:18.5px;top:5px;font-size:8.4px;color:#333;white-space:nowrap;line-height:10px">write-attribute@vapp0001</div>
  <svg class="a" style="left:211.5px;top:6px" width="8" height="8" viewBox="0 0 8 8"><path d="M0.5 0.5 L7.5 7.5 M7.5 0.5 L0.5 7.5" stroke="#333" stroke-width="0.9"/></svg>
  <div class="bt" style="left:5px;top:25.5px">Sets the value of an attribute for the selected resource</div>
  <div class="a" style="left:-0.5px;top:44.5px;width:227px;height:42px;border:1px solid #b5c0cc;border-left-color:#aab4c0"></div>
  <div class="bt" style="left:56px;top:48px;font-weight:normal;font-size:7.4px;color:#111">name: *</div>
  <div class="bt" style="left:123px;top:48px;font-weight:normal;font-size:7.4px;color:#111">level</div>
  <div class="bt" style="left:56px;top:64px;font-weight:normal;font-size:7.4px;color:#111">value:</div>
  <div class="a" style="left:0;top:75px;width:226px;height:10.5px;overflow:hidden"><div class="bt" style="left:56px;top:2.5px">* = Required Field</div></div>
  <div class="btn" style="left:75.8px;top:95.5px;width:30px;height:14px"></div>
  <div class="bt" style="left:84.8px;top:98.5px">OK</div>
  <div class="btn" style="left:107.8px;top:95.5px;width:40px;height:14px"></div>
  <div class="bt" style="left:114.5px;top:98.5px">Cancel</div>
</div>
<!-- combo -->
<div class="a" style="left:370px;top:253.5px;width:48px;height:13px;background:#a9b9cc;border:1px solid #9aaabd"></div>
<div class="a" style="left:407.5px;top:254px;width:10px;height:12px;background:linear-gradient(#f3f6fa,#c7d8ec)"></div>
<svg class="a" style="left:410px;top:258.5px" width="5" height="3" viewBox="0 0 5 3"><path d="M0 0 L5 0 L2.5 3Z" fill="#111"/></svg>
<div class="bt" style="left:372px;top:255.5px;color:#333;transform:scaleX(0.87);transform-origin:0 0">FINE</div>
<div class="a" style="left:370px;top:266px;width:48px;height:77px;background:#eeeeee;border:1px solid #6c6c6c;overflow:hidden">
  <div class="a" style="left:0;top:10.5px;width:37px;height:9px;background:#a9b9cc"></div>
  <div class="bt" style="left:1px;top:2.5px;color:#333;transform:scaleX(0.87);transform-origin:0 0">ALL</div>
  <div class="bt" style="left:1px;top:11.8px;color:#333;transform:scaleX(0.87);transform-origin:0 0">FINEST</div>
  <div class="bt" style="left:1px;top:21.2px;color:#333;transform:scaleX(0.87);transform-origin:0 0">FINER</div>
  <div class="bt" style="left:1px;top:30.5px;color:#333;transform:scaleX(0.87);transform-origin:0 0">TRACE</div>
  <div class="bt" style="left:1px;top:39.8px;color:#333;transform:scaleX(0.87);transform-origin:0 0">DEBUG</div>
  <div class="bt" style="left:1px;top:49.2px;color:#333;transform:scaleX(0.87);transform-origin:0 0">FINE</div>
  <div class="bt" style="left:1px;top:58.5px;color:#333;transform:scaleX(0.87);transform-origin:0 0">CONFIG</div>
  <div class="bt" style="left:1px;top:67.8px;color:#333;transform:scaleX(0.87);transform-origin:0 0">INFO</div>
  <div class="a" style="left:37px;top:0;width:9px;height:75px;background:#eeeeee;border-left:1px solid #c8d2dc"></div>
  <div class="btn" style="left:37px;top:0;width:9px;height:9px;border-radius:0;background:linear-gradient(#fff,#e6eef7)"></div>
  <svg class="a" style="left:39px;top:3px" width="5" height="3" viewBox="0 0 5 3"><path d="M0 3 L2.5 0 L5 3Z" fill="#222"/></svg>
  <div class="a" style="left:37px;top:10px;width:9px;height:33px;border:1px solid #9fb6d2;background:linear-gradient(90deg,#d6e4f3,#f0f6fc 60%,#c8dbf0)"></div>
  <div class="a" style="left:40px;top:26px;width:3px;height:2px;background:#97aac2"></div>
  <div class="btn" style="left:37px;top:66px;width:9px;height:9px;border-radius:0;background:linear-gradient(#fff,#e6eef7)"></div>
  <svg class="a" style="left:39px;top:69px" width="5" height="3" viewBox="0 0 5 3"><path d="M0 0 L5 0 L2.5 3Z" fill="#222"/></svg>
</div>
</body></html>
